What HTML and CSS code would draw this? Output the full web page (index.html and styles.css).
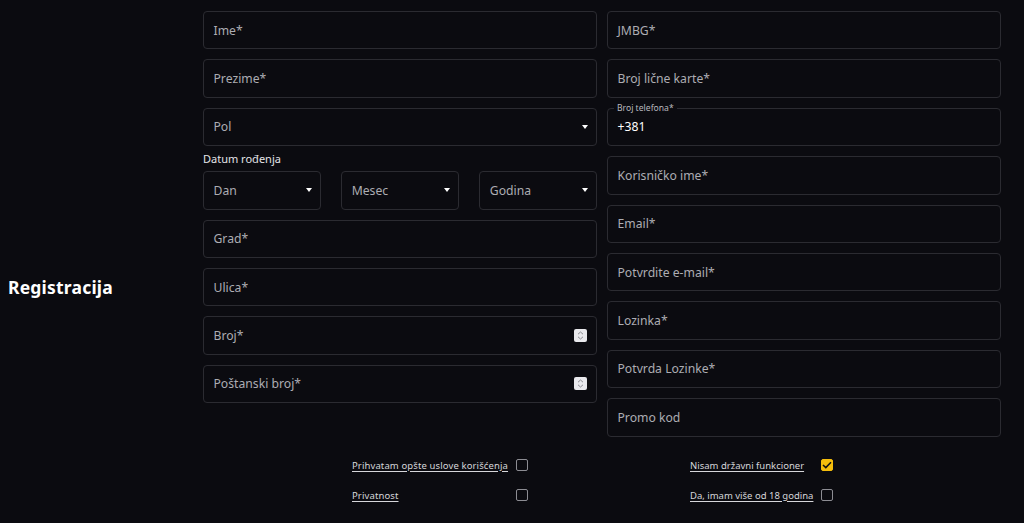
FILE: index.html
```html
<!DOCTYPE html>
<html lang="sr">
<head>
<meta charset="utf-8">
<title>Registracija</title>
<link rel="stylesheet" href="styles.css">
</head>
<body>
<div class="page">
  <aside class="aside">
    <h1 class="title">Registracija</h1>
  </aside>
  <main class="form">
    <div class="cols">
      <div class="col">
        <div class="field"><span class="ph">Ime*</span></div>
        <div class="field"><span class="ph">Prezime*</span></div>
        <div class="field select"><span class="ph">Pol</span><span class="caret"></span></div>
        <div class="dob">
          <div class="dob-label">Datum rođenja</div>
          <div class="dob-row">
            <div class="field select"><span class="ph">Dan</span><span class="caret"></span></div>
            <div class="field select"><span class="ph">Mesec</span><span class="caret"></span></div>
            <div class="field select"><span class="ph">Godina</span><span class="caret"></span></div>
          </div>
        </div>
        <div class="field"><span class="ph">Grad*</span></div>
        <div class="field"><span class="ph">Ulica*</span></div>
        <div class="field number"><span class="ph">Broj*</span>
          <span class="spin"><svg width="7" height="9" viewBox="0 0 7 9"><path d="M1 3.2 L3.5 1 L6 3.2 M1 5.8 L3.5 8 L6 5.8" fill="none" stroke="#8a8a90" stroke-width="1"/></svg></span>
        </div>
        <div class="field number"><span class="ph">Poštanski broj*</span>
          <span class="spin"><svg width="7" height="9" viewBox="0 0 7 9"><path d="M1 3.2 L3.5 1 L6 3.2 M1 5.8 L3.5 8 L6 5.8" fill="none" stroke="#8a8a90" stroke-width="1"/></svg></span>
        </div>
      </div>
      <div class="col">
        <div class="field"><span class="ph">JMBG*</span></div>
        <div class="field"><span class="ph">Broj lične karte*</span></div>
        <div class="field outlined"><span class="legend">Broj telefona*</span><span class="val">+381</span></div>
        <div class="field"><span class="ph">Korisničko ime*</span></div>
        <div class="field"><span class="ph">Email*</span></div>
        <div class="field"><span class="ph">Potvrdite e-mail*</span></div>
        <div class="field"><span class="ph">Lozinka*</span></div>
        <div class="field"><span class="ph">Potvrda Lozinke*</span></div>
        <div class="field"><span class="ph">Promo kod</span></div>
      </div>
    </div>
    <div class="checks">
      <div class="group group-left">
        <a class="chk-label">Prihvatam opšte uslove korišćenja</a><span class="box"></span>
        <a class="chk-label">Privatnost</a><span class="box"></span>
      </div>
      <div class="group group-right">
        <a class="chk-label">Nisam državni funkcioner</a><span class="box checked"><svg width="10" height="8" viewBox="0 0 10 8"><path d="M1 4 L3.8 6.6 L9 1.2" fill="none" stroke="#111" stroke-width="1.5"/></svg></span>
        <a class="chk-label">Da, imam više od 18 godina</a><span class="box"></span>
      </div>
    </div>
  </main>
</div>
</body>
</html>
```
FILE: styles.css
```css
* { box-sizing: border-box; }
html, body { margin: 0; padding: 0; }
body {
  background: #0b0b10;
  color: #e6e6ea;
  font-family: "Noto Sans", "Open Sans", "DejaVu Sans", sans-serif;
  width: 1024px;
  height: 523px;
  overflow: hidden;
}
.page {
  display: flex;
  padding-top: 11px;
}
.aside {
  width: 203px;
  padding-left: 8px;
}
.title {
  margin: 265px 0 0;
  font-size: 17.5px;
  line-height: 22px;
  font-weight: 700;
  letter-spacing: 0.2px;
  color: #ffffff;
}
.form { width: 798px; }
.cols {
  display: grid;
  grid-template-columns: 394px 394px;
  column-gap: 10px;
}
.col {
  display: flex;
  flex-direction: column;
  gap: 10px;
}
.field {
  position: relative;
  height: 38.4px;
  border: 1px solid #2b2b31;
  border-radius: 4px;
  display: flex;
  align-items: center;
  padding: 0 9px 0 9.5px;
  font-size: 12.2px;
}
.ph { color: #adadb3; flex: 1; }
.val { color: #ffffff; }
.caret {
  width: 0; height: 0;
  border-left: 3px solid transparent;
  border-right: 3px solid transparent;
  border-top: 4px solid #ffffff;
  margin-right: -1px;
}
.dob { margin-top: -4px; }
.dob-label {
  font-size: 11px;
  line-height: 13px;
  color: #e4e4e8;
}
.dob-row {
  margin-top: 6px;
  display: grid;
  grid-template-columns: 1fr 1fr 1fr;
  column-gap: 20.5px;
}
.spin {
  width: 13px;
  height: 13px;
  background: #e9e9ed;
  border-radius: 2px;
  display: flex;
  align-items: center;
  justify-content: center;
}
.legend {
  position: absolute;
  left: 6px;
  top: -6px;
  padding: 0 3px;
  background: #0b0b10;
  font-size: 8.6px;
  line-height: 10px;
  color: #b9b9bf;
}
.checks {
  margin-top: 22px;
  display: grid;
  grid-template-columns: 394px 394px;
  column-gap: 10px;
}
.group {
  display: grid;
  grid-template-columns: max-content 12px;
  column-gap: 8px;
  row-gap: 17px;
  align-items: center;
  justify-content: start;
}
.group-left { padding-left: 149px; }
.group-right { padding-left: 83px; }
.chk-label {
  font-size: 9.5px;
  line-height: 13px;
  color: #d6d6da;
  text-decoration: underline;
  text-underline-offset: 2px;
}
.group-left .chk-label { letter-spacing: 0.12px; }
.box {
  width: 12px;
  height: 12px;
  border: 1.5px solid #8d8d93;
  border-radius: 2px;
  display: flex;
  align-items: center;
  justify-content: center;
}
.box.checked {
  background: #f5bd0c;
  border-color: #f5bd0c;
}
```
